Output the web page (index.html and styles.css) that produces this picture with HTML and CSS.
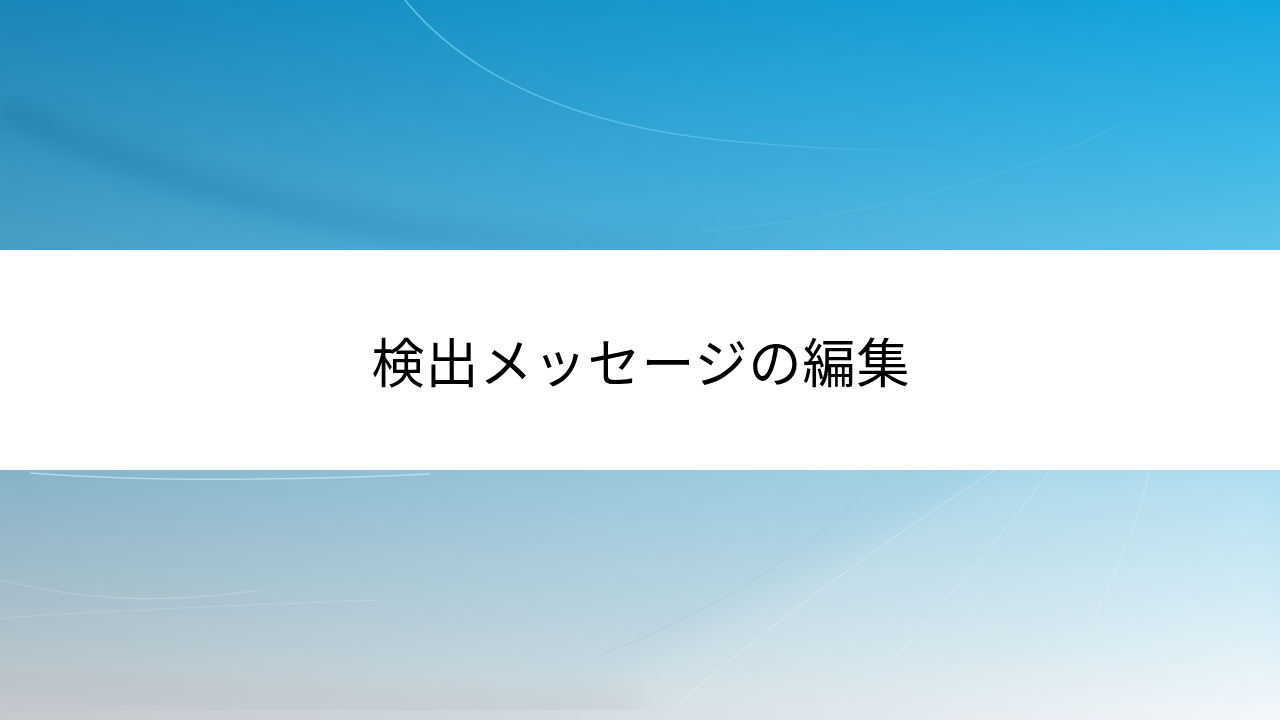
FILE: index.html
```html
<!DOCTYPE html>
<html lang="ja">
<head>
<meta charset="utf-8">
<title>検出メッセージの編集</title>
<link rel="stylesheet" href="styles.css">
</head>
<body>
<div class="slide">
  <div class="band band-top">
    <svg class="deco" viewBox="0 0 1280 250" preserveAspectRatio="none" aria-hidden="true">
      <defs>
        <linearGradient id="topRowB" x1="0" y1="0" x2="1" y2="0">
          <stop offset="0" stop-color="#4a9ec5"/>
          <stop offset="0.5" stop-color="#4cb0dc"/>
          <stop offset="1" stop-color="#5dc3e9"/>
        </linearGradient>
        <linearGradient id="vmask" x1="0" y1="0" x2="0" y2="1">
          <stop offset="0" stop-color="#fff" stop-opacity="0"/>
          <stop offset="1" stop-color="#fff" stop-opacity="1"/>
        </linearGradient>
        <mask id="mTop"><rect width="1280" height="250" fill="url(#vmask)"/></mask>
        <linearGradient id="fadeA" x1="0" y1="0" x2="1" y2="0">
          <stop offset="0" stop-color="#7fd6f7" stop-opacity="0.8"/>
          <stop offset="0.6" stop-color="#7fd6f7" stop-opacity="0.4"/>
          <stop offset="1" stop-color="#7fd6f7" stop-opacity="0"/>
        </linearGradient>
        <linearGradient id="darkA" x1="0" y1="0" x2="1" y2="0">
          <stop offset="0" stop-color="#0d5f8a" stop-opacity="0.2"/>
          <stop offset="0.5" stop-color="#0d5f8a" stop-opacity="0.13"/>
          <stop offset="1" stop-color="#0d5f8a" stop-opacity="0"/>
        </linearGradient>
        <filter id="blur8"><feGaussianBlur stdDeviation="10"/></filter>
      </defs>
      <rect width="1280" height="250" fill="url(#topRowB)" mask="url(#mTop)"/>
      <path d="M0 108 C 120 162, 260 215, 470 238 C 600 252, 760 245, 900 222" fill="none" stroke="url(#darkA)" stroke-width="30" filter="url(#blur8)"/>
      <path d="M405 0 C 470 80, 580 125, 720 140 C 820 150, 900 152, 960 150" fill="none" stroke="url(#fadeA)" stroke-width="1.3"/>
      <path d="M700 232 C 850 218, 1000 185, 1120 125" fill="none" stroke="#8fd8f5" stroke-opacity="0.12" stroke-width="2"/>
    </svg>
  </div>
  <div class="band band-mid">
    <h1 class="title">検出メッセージの編集</h1>
  </div>
  <div class="band band-bottom">
    <svg class="deco" viewBox="0 0 1280 250" preserveAspectRatio="none" aria-hidden="true">
      <defs>
        <linearGradient id="botRowB" x1="0" y1="0" x2="1" y2="0">
          <stop offset="0" stop-color="#c6c9cc"/>
          <stop offset="0.5" stop-color="#d3dde2"/>
          <stop offset="1" stop-color="#f3f7fa"/>
        </linearGradient>
        <linearGradient id="vmask2" x1="0" y1="0" x2="0" y2="1">
          <stop offset="0" stop-color="#fff" stop-opacity="0"/>
          <stop offset="1" stop-color="#fff" stop-opacity="1"/>
        </linearGradient>
        <mask id="mBot"><rect width="1280" height="250" fill="url(#vmask2)"/></mask>
        <filter id="blur10"><feGaussianBlur stdDeviation="12"/></filter>
      </defs>
      <rect width="1280" height="250" fill="url(#botRowB)" mask="url(#mBot)"/>
      <path d="M560 250 C 700 150, 900 60, 1000 0 L 1280 0 L 1280 250 Z" fill="#ffffff" fill-opacity="0.12" filter="url(#blur10)"/>
      <path d="M660 250 C 760 160, 900 60, 995 0" fill="none" stroke="#ffffff" stroke-opacity="0.35" stroke-width="1"/>
      <path d="M600 185 C 720 140, 830 70, 880 0" fill="none" stroke="#8aa7b4" stroke-opacity="0.22" stroke-width="1"/>
      <path d="M840 250 C 920 160, 1000 70, 1050 0" fill="none" stroke="#ffffff" stroke-opacity="0.32" stroke-width="1"/>
      <path d="M1030 250 C 1090 170, 1130 80, 1150 0" fill="none" stroke="#ffffff" stroke-opacity="0.28" stroke-width="1"/>
      <path d="M30 3 C 150 12, 300 10, 430 4" fill="none" stroke="#d8f0fa" stroke-opacity="0.6" stroke-width="1.5"/>
      <path d="M0 110 C 80 130, 160 135, 260 120" fill="none" stroke="#ffffff" stroke-opacity="0.22" stroke-width="1.2"/>
      <path d="M0 148 C 120 140, 240 135, 380 130" fill="none" stroke="#ffffff" stroke-opacity="0.18" stroke-width="1"/>
      <path d="M0 205 C 200 230, 420 240, 640 235" fill="none" stroke="#b5bcc1" stroke-opacity="0.3" stroke-width="30" filter="url(#blur10)"/>
    </svg>
  </div>
</div>
</body>
</html>
```

FILE: styles.css
```css
html, body {
  margin: 0;
  padding: 0;
}

body {
  width: 1280px;
  height: 720px;
  overflow: hidden;
  background: #ffffff;
  font-family: "Noto Sans CJK JP", "Noto Sans", sans-serif;
}

.slide {
  display: flex;
  flex-direction: column;
  width: 1280px;
  height: 720px;
}

.band {
  display: flex;
}

.deco {
  display: block;
  width: 100%;
  height: 100%;
}

.band-top {
  height: 250px;
  background: linear-gradient(to right, #1a86b8 0%, #1798cc 50%, #12a7e0 100%);
}

.band-mid {
  height: 220px;
  background: #ffffff;
  align-items: center;
  justify-content: center;
}

.title {
  margin: 0;
  font-size: 53px;
  font-weight: 400;
  color: #000000;
  letter-spacing: 1px;
  line-height: 1;
  padding-left: 2px;
}

.band-bottom {
  height: 250px;
  background: linear-gradient(to right, #86b3c8 0%, #98c8dc 50%, #a8dcef 100%);
}
```
